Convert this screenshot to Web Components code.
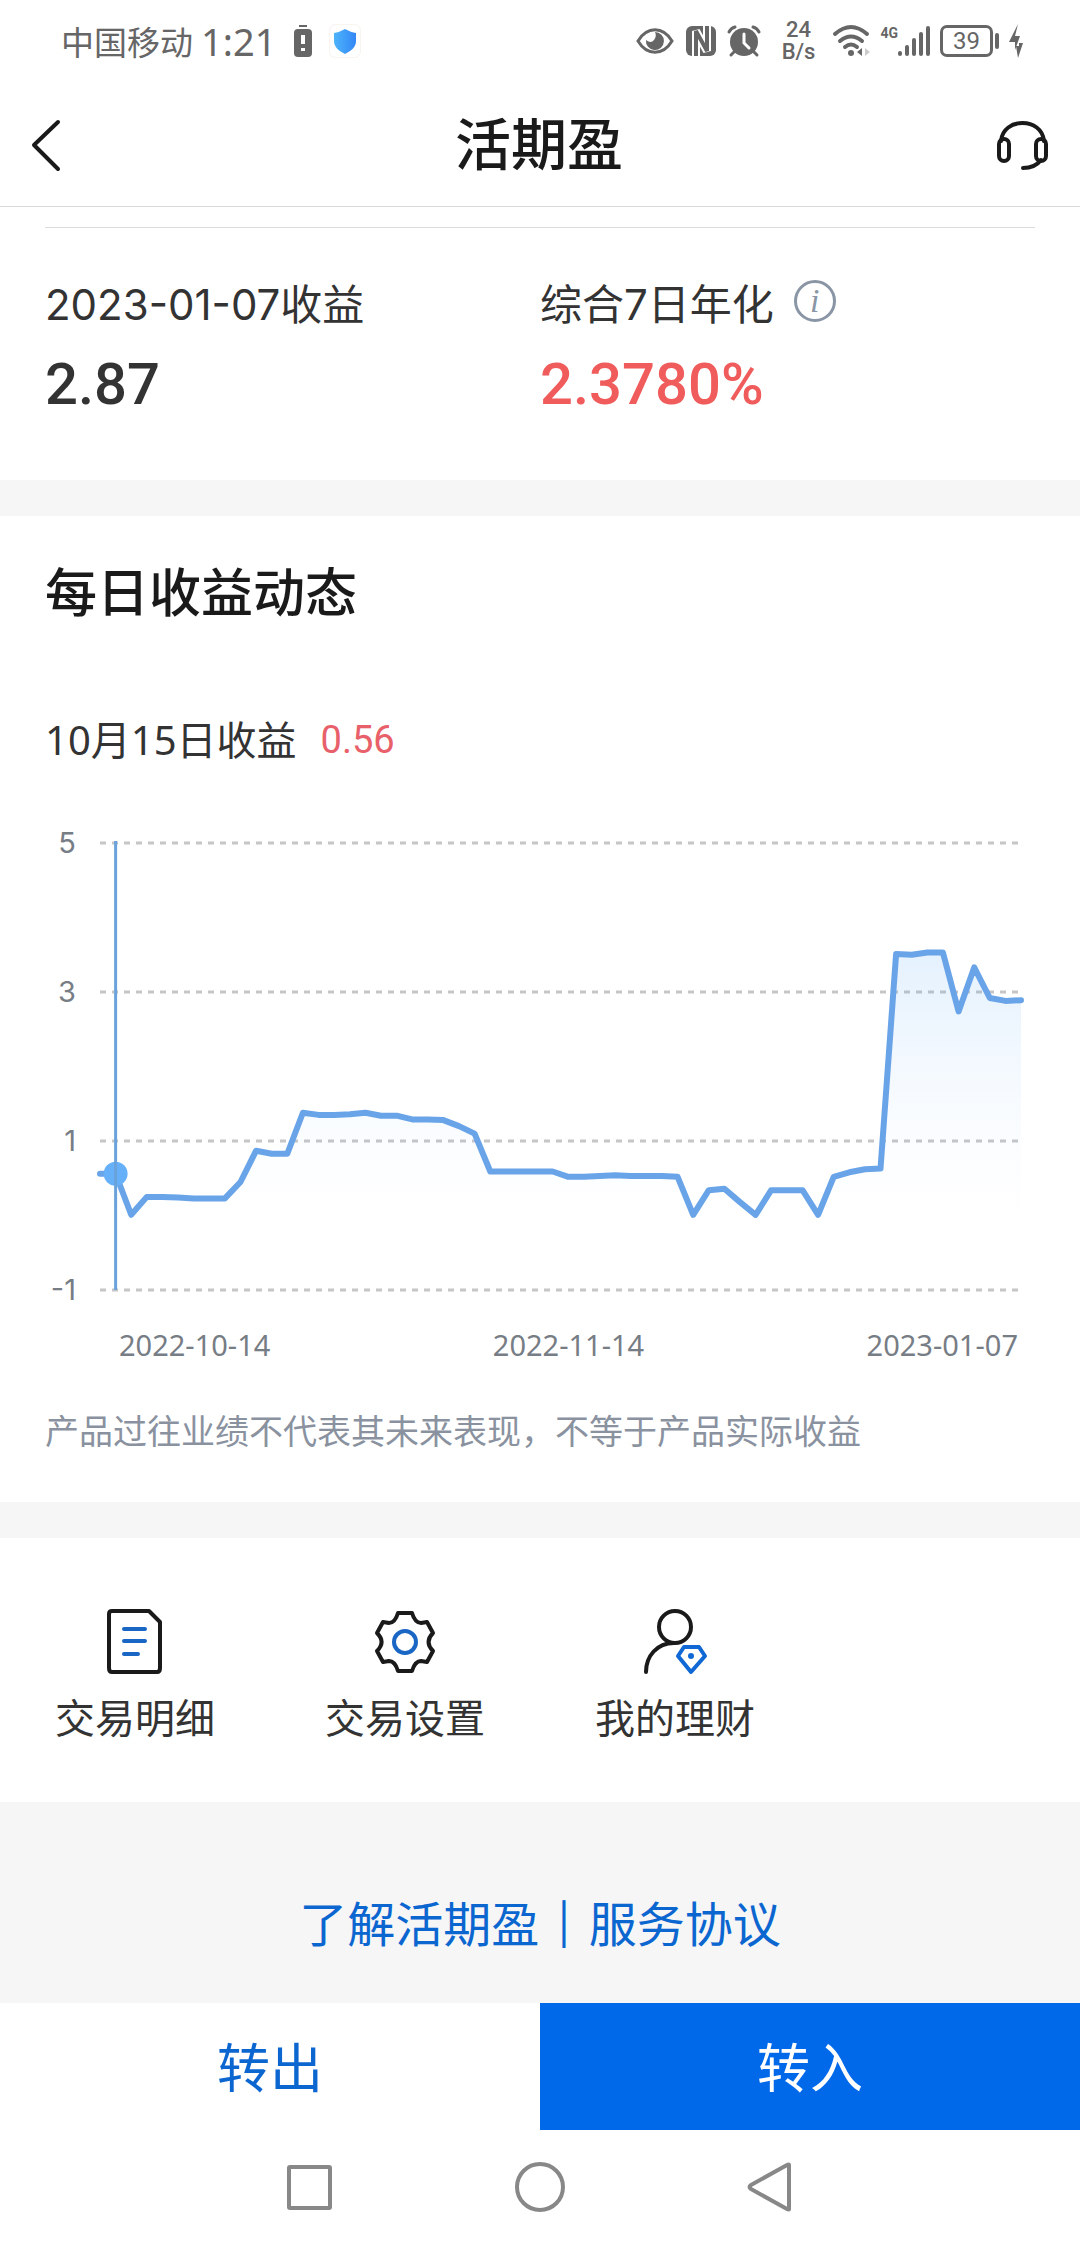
<!DOCTYPE html>
<html lang="zh-CN">
<head>
<meta charset="utf-8">
<meta name="viewport" content="width=device-width, initial-scale=1">
<title>活期盈</title>
<style>
  body {
    margin: 0;
    background: #fff;
    color: #333;
    font-family: Inter, "Noto Sans CJK SC", sans-serif;
  }
</style>
</head>
<body>
<income-page></income-page>

<script>
const ICONS = {
  alert: { w: 18, h: 32, svg: `
    <rect x="5" y="0" width="8" height="2" fill="currentColor"/>
    <rect y="4" width="18" height="28" rx="4" fill="currentColor"/>
    <path d="M9 10v9M9 23v3" stroke="#fff" stroke-width="4"/>` },
  shield: { w: 32, h: 34, svg: `
    <defs><linearGradient id="g" x2="1"><stop stop-color="#4db4fb"/><stop offset="1" stop-color="#3387f5"/></linearGradient></defs>
    <rect x=".5" y=".5" width="31" height="33" rx="6" fill="#fff" stroke="#f8f4ef"/>
    <path d="M16 5q5 3 11 4v8c0 6-5 10-11 13-6-3-11-7-11-13V9q6-1 11-4z" fill="url(#g)"/>` },
  eye: { w: 38, h: 26, svg: `
    <path d="M2 13C11-2 27-2 36 13 27 28 11 28 2 13z" fill="none" stroke="currentColor" stroke-width="3"/>
    <path d="M19 4a9 9 0 1 1-9 8q5 4 8 0 3-4 1-8z" fill="currentColor"/>` },
  nfc: { w: 30, h: 30, svg: `
    <rect width="30" height="30" rx="6" fill="currentColor"/>
    <path d="M10 30V5l11 20V0" fill="none" stroke="#fff" stroke-width="8" stroke-linejoin="bevel"/>
    <path d="M10 30V5l11 20V0" fill="none" stroke="currentColor" stroke-width="4" stroke-linejoin="bevel"/>` },
  alarm: { w: 32, h: 30, svg: `
    <circle cx="16" cy="16" r="14" fill="currentColor"/>
    <path d="M1 6q2-4 6-5M31 6q-2-4-6-5M6 26l-3 3M26 26l3 3" fill="none" stroke="currentColor" stroke-width="3" stroke-linecap="round"/>
    <path d="M16 8v9l5 5" fill="none" stroke="#fff" stroke-width="3" stroke-linecap="round"/>` },
  wifi: { w: 37, h: 32, svg: `
    <path d="M2 9q16-14 32 0M7 16q11-9 22 0M12 22q6-5 12 0" fill="none" stroke="currentColor" stroke-width="4" stroke-linecap="round"/>
    <circle cx="18" cy="28" r="3" fill="currentColor"/>
    <path d="M29 23v8l-5-4z" fill="currentColor"/><path d="M32 23v8l5-4z" fill="#ccc"/>` },
  signal: { w: 32, h: 32, svg: `
    <path d="M2 28v1M9 22v7M16 15v14M23 9v20M30 3v26" stroke="currentColor" stroke-width="4" stroke-linecap="round"/>` },
  bolt: { w: 14, h: 34, svg: `
    <path d="M9 0L0 18h6v8l5-14H6z M10 14v8H7l2 12 5-15h-4z" fill="currentColor"/>` },
  back: { w: 36, h: 56, svg: `
    <path d="M30 5L6 28l24 24" fill="none" stroke="currentColor" stroke-width="4" stroke-linecap="round" stroke-linejoin="round"/>` },
  headset: { w: 56, h: 56, svg: `
    <g fill="none" stroke="currentColor" stroke-width="4" stroke-linecap="round">
      <rect x="5" y="22" width="10" height="22" rx="5"/><rect x="42" y="22" width="10" height="22" rx="5"/>
      <path d="M7 24C9 0 48 0 50 24M47 43q-6 8-18 8"/>
    </g>` },
  bill: { w: 72, h: 72, svg: `
    <g fill="none" stroke-width="4" stroke-linecap="round" stroke-linejoin="round">
      <path d="M13 6h37l11 11v46q0 4-3 4H13q-3 0-3-4V9q0-3 3-3z" stroke="#1a1a1a"/>
      <path d="M25 24h21M25 36h21M25 49h14" stroke="#1a66c4"/>
    </g>` },
  gear: { w: 72, h: 72, svg: `
    <path d="M29 8h14q3 10 9 10l6-1 6 11q-9 9 0 18l-6 11-6-1q-6 0-9 10H29q-3-10-9-10l-6 1L8 46q9-9 0-18l6-11 6 1q6 0 9-10z" fill="none" stroke="#1a1a1a" stroke-width="4" stroke-linejoin="round"/>
    <circle cx="36" cy="37" r="11" fill="none" stroke="#1a66c4" stroke-width="4"/>` },
  wealth: { w: 72, h: 72, svg: `
    <g fill="none" stroke-width="4" stroke-linecap="round" stroke-linejoin="round">
      <circle cx="36" cy="22" r="16" stroke="#1a1a1a"/>
      <path d="M7 67c0-16 11-29 28-29" stroke="#1a1a1a"/>
      <path d="M45 42h15l6 9-14 16-13-16z" stroke="#1068d4"/>
    </g>
    <circle cx="52" cy="51" r="3" fill="#1068d4"/>` },
  recents: { w: 50, h: 50, svg: `
    <rect x="4" y="5" width="41" height="41" rx="1" fill="none" stroke="currentColor" stroke-width="4"/>` },
  home: { w: 50, h: 50, svg: `
    <circle cx="25" cy="25" r="23" fill="none" stroke="currentColor" stroke-width="4"/>` },
  previous: { w: 50, h: 50, svg: `
    <path d="M44 3v44q0 1-2 0L6 27q-3-2 0-4L42 3q2-1 2 0z" fill="none" stroke="currentColor" stroke-width="4" stroke-linejoin="round"/>` }
};

class UiIcon extends HTMLElement {
  connectedCallback() {
    const icon = ICONS[this.getAttribute('name')];
    this.attachShadow({ mode: 'open' }).innerHTML = `
      <style>
        :host { display: inline-flex; flex: none; }
        svg { display: block; overflow: visible; }
      </style>
      <svg width="${icon.w}" height="${icon.h}" viewBox="0 0 ${icon.w} ${icon.h}" aria-hidden="true">${icon.svg}</svg>
    `;
  }
}
customElements.define('ui-icon', UiIcon);

class StatusBar extends HTMLElement {
  constructor() {
    super();
    this.attachShadow({ mode: 'open' }).innerHTML = `
      <style>
        :host {
          display: flex; justify-content: space-between; align-items: center;
          height: 84px; padding: 0 57px 2px 61px; box-sizing: border-box; color: #666;
          font-family: "Noto Sans", "Noto Sans CJK SC", sans-serif;
        }
        div { display: flex; align-items: center; }
        .carrier { font-size: 33px; }
        .time { font-size: 38px; margin: 0 18px 0 8px; }
        .left ui-icon + ui-icon { margin-left: 17px; }
        .right { gap: 10px; }
        .modes { gap: 12px; }
        .speed { flex-direction: column; font: 500 22px/22px Roboto, sans-serif; margin: 0 8px 0 12px; }
        .mobile { align-items: flex-start; }
        .mobile span { font: 700 14px/16px Roboto, sans-serif; }
        .battery { gap: 2px; }
        .level {
          width: 53px; height: 32px; box-sizing: border-box; justify-content: center;
          border: 3px solid; border-radius: 7px; font: 24px/24px Roboto, sans-serif;
        }
        .knob { width: 4px; height: 16px; border-radius: 2px; background: currentColor; }
      </style>
      <div class="left">
        <span class="carrier">中国移动</span><span class="time">1:21</span>
        <ui-icon name="alert"></ui-icon><ui-icon name="shield"></ui-icon>
      </div>
      <div class="right">
        <div class="modes">
          <ui-icon name="eye"></ui-icon>
          <ui-icon name="nfc"></ui-icon>
          <ui-icon name="alarm"></ui-icon>
        </div>
        <div class="speed"><span>24</span><span>B/s</span></div>
        <ui-icon name="wifi"></ui-icon>
        <div class="mobile"><span>4G</span><ui-icon name="signal"></ui-icon></div>
        <div class="battery"><div class="level">39</div><div class="knob"></div></div>
        <ui-icon name="bolt"></ui-icon>
      </div>
    `;
  }
}
customElements.define('status-bar', StatusBar);

class PageHeader extends HTMLElement {
  constructor() {
    super();
    this.attachShadow({ mode: 'open' }).innerHTML = `
      <style>
        :host {
          display: grid; grid-template-columns: 1fr auto 1fr; align-items: center;
          height: 123px; box-sizing: border-box; padding: 0 30px 0 28px;
          border-bottom: 1px solid #d9d9d9; color: #1a1a1a;
        }
        h1 { margin: 0; font-size: 56px; font-weight: 500; line-height: 80px; }
        button { display: flex; padding: 0; border: 0; background: none; color: inherit; cursor: pointer; }
        .service { justify-self: end; }
      </style>
      <button aria-label="返回"><ui-icon name="back"></ui-icon></button>
      <h1><slot></slot></h1>
      <button class="service" aria-label="客服"><ui-icon name="headset"></ui-icon></button>
    `;
  }
}
customElements.define('page-header', PageHeader);

class SummaryItem extends HTMLElement {
  constructor() {
    super();
    this.attachShadow({ mode: 'open' }).innerHTML = `
      <style>
        :host { display: block; }
        .label { display: flex; align-items: center; gap: 20px; font-size: 42px; line-height: 60px; }
        .value { margin-top: 13px; font: 500 58px/72px Roboto, sans-serif; }
        :host([highlight]) .value { color: #f05b5b; }
      </style>
      <div class="label"><slot name="label"></slot><slot name="info"></slot></div>
      <div class="value"><slot></slot></div>
    `;
  }
}
customElements.define('summary-item', SummaryItem);

class InfoButton extends HTMLElement {
  constructor() {
    super();
    this.attachShadow({ mode: 'open' }).innerHTML = `
      <style>
        :host { display: flex; margin-bottom: 8px; }
        button {
          width: 42px; height: 42px; box-sizing: border-box; padding: 0; border: 3px solid #8a96a5;
          border-radius: 50%; background: none; color: #8a96a5; cursor: pointer;
          font: italic 34px/34px "Liberation Serif", serif;
        }
      </style>
      <button>i</button>
    `;
  }
}
customElements.define('info-button', InfoButton);

const INCOME = [
  0.56, 0.56, 0.01, 0.25, 0.25, 0.24, 0.23, 0.23, 0.23, 0.45, 0.87, 0.83, 0.83, 1.38, 1.35,
  1.35, 1.36, 1.38, 1.34, 1.34, 1.29, 1.29, 1.28, 1.20, 1.10, 0.59, 0.59, 0.59, 0.59, 0.59,
  0.52, 0.52, 0.53, 0.54, 0.53, 0.53, 0.53, 0.52, 0.01, 0.34, 0.36, 0.18, 0.01, 0.34, 0.34,
  0.34, 0.01, 0.52, 0.58, 0.62, 0.63, 3.51, 3.50, 3.53, 3.53, 2.74, 3.33, 2.92, 2.88, 2.89
];

class IncomeChart extends HTMLElement {
  constructor() {
    super();
    this.attachShadow({ mode: 'open' });
    this._selected = 1;
  }

  connectedCallback() {
    const ticks = [5, 3, 1, -1];
    const x = i => 5 + i * 921 / (INCOME.length - 1);
    const y = v => 15 + (5 - v) * 149 / 2;
    const points = INCOME.map((v, i) => `${x(i).toFixed(1)},${y(v).toFixed(1)}`).join(' ');
    const sx = x(this._selected);

    this.shadowRoot.innerHTML = `
      <style>
        :host {
          display: block; color: #777d85;
          font: 29px/30px "Noto Sans", "Noto Sans CJK SC", sans-serif;
        }
        .plot { display: flex; gap: 19px; }
        .y {
          width: 31px; display: flex; flex-direction: column; justify-content: space-between;
          text-align: right; font-family: Inter, sans-serif;
        }
        svg { flex: 1; min-width: 0; overflow: visible; }
        .x { display: flex; justify-content: space-between; margin-top: 20px; padding: 0 17px 0 74px; line-height: 40px; }
      </style>
      <div class="plot">
        <div class="y">${ticks.map(t => `<span>${t}</span>`).join('')}</div>
        <svg viewBox="0 0 940 477" role="img" aria-label="每日收益动态">
          <defs>
            <linearGradient id="area" x2="0" y2="1">
              <stop stop-color="#5ba9f5" stop-opacity=".16"/>
              <stop offset=".6" stop-color="#5ba9f5" stop-opacity=".04"/>
              <stop offset="1" stop-color="#5ba9f5" stop-opacity="0"/>
            </linearGradient>
          </defs>
          ${ticks.map(t => `<path d="M5 ${y(t)}H924" stroke="#c6c6c6" stroke-width="3" stroke-dasharray="6 6"/>`).join('')}
          <polygon points="${x(0)},${y(0)} ${points} ${x(INCOME.length - 1)},${y(0)}" fill="url(#area)"/>
          <polyline points="${points}" fill="none" stroke="#6aa4e8" stroke-width="6" stroke-linecap="round" stroke-linejoin="round"/>
          <circle cx="${sx}" cy="${y(INCOME[this._selected])}" r="12" fill="#66b0fa"/>
          <path d="M${sx} 13V462" stroke="#6aa2dc" stroke-width="3"/>
        </svg>
      </div>
      <div class="x"><span>2022-10-14</span><span>2022-11-14</span><span>2023-01-07</span></div>
    `;
  }
}
customElements.define('income-chart', IncomeChart);

class ActionItem extends HTMLElement {
  connectedCallback() {
    this.attachShadow({ mode: 'open' }).innerHTML = `
      <style>
        :host { display: block; }
        button {
          display: flex; flex-direction: column; align-items: center; gap: 14px; width: 100%;
          padding: 0; border: 0; background: none; color: #333; font: inherit;
          font-size: 40px; line-height: 56px; cursor: pointer;
        }
      </style>
      <button><ui-icon name="${this.getAttribute('icon')}"></ui-icon><slot></slot></button>
    `;
  }
}
customElements.define('action-item', ActionItem);

class TransferBar extends HTMLElement {
  constructor() {
    super();
    this.attachShadow({ mode: 'open' }).innerHTML = `
      <style>
        :host { display: grid; grid-template-columns: 1fr 1fr; }
        button {
          padding: 30px 0 25px; border: 0; background: #fff; color: #0b66d0;
          font: inherit; font-size: 53px; line-height: 72px; cursor: pointer;
        }
        .in { background: #0069ea; color: #fff; }
      </style>
      <button>转出</button><button class="in">转入</button>
    `;
  }
}
customElements.define('transfer-bar', TransferBar);

class NavBar extends HTMLElement {
  constructor() {
    super();
    this.attachShadow({ mode: 'open' }).innerHTML = `
      <style>
        :host { display: flex; justify-content: center; gap: 180px; padding: 32px 0; color: #888; }
        button { display: flex; padding: 0; border: 0; background: none; color: inherit; cursor: pointer; }
      </style>
      <button aria-label="最近任务"><ui-icon name="recents"></ui-icon></button>
      <button aria-label="主页"><ui-icon name="home"></ui-icon></button>
      <button aria-label="返回"><ui-icon name="previous"></ui-icon></button>
    `;
  }
}
customElements.define('nav-bar', NavBar);

class IncomePage extends HTMLElement {
  constructor() {
    super();
    this.attachShadow({ mode: 'open' }).innerHTML = `
      <style>
        :host { display: block; }
        main { background: #f6f6f6; display: flex; flex-direction: column; }
        section { background: #fff; margin-bottom: 36px; padding: 0 45px; }
        .summary { padding-top: 20px; padding-bottom: 60px; }
        .summary-row { display: grid; grid-template-columns: 1fr 1fr; padding-top: 47px; border-top: 1px solid #dcdcdc; }
        .daily { padding-top: 42px; padding-bottom: 45px; }
        h2 { margin: 0; color: #1a1a1a; font-size: 52px; font-weight: 500; line-height: 72px; }
        .day {
          display: flex; align-items: center; gap: 24px; margin: 80px 0 58px;
          font: 40px/60px "Noto Sans", "Noto Sans CJK SC", sans-serif;
        }
        .day b { color: #e8606a; font-family: Roboto, sans-serif; font-size: 38px; font-weight: 400; }
        .note { margin: 42px 0 0; color: #8a929f; font-size: 34px; line-height: 50px; }
        .actions { display: grid; grid-template-columns: repeat(4, 1fr); margin: 0; padding: 67px 0 55px; }
        .links {
          display: flex; justify-content: center; gap: 18px; padding: 88px 0 43px;
          color: #0b66d0; font-size: 48px; line-height: 70px;
        }
        .links span { font-size: 40px; }
        a { color: inherit; text-decoration: none; }
      </style>
      <status-bar></status-bar>
      <page-header>活期盈</page-header>
      <main>
        <section class="summary">
          <div class="summary-row">
            <summary-item><span slot="label">2023-01-07收益</span>2.87</summary-item>
            <summary-item highlight>
              <span slot="label">综合7日年化</span><info-button slot="info"></info-button>2.3780%
            </summary-item>
          </div>
        </section>
        <section class="daily">
          <h2>每日收益动态</h2>
          <div class="day"><span>10月15日收益</span><b>0.56</b></div>
          <income-chart></income-chart>
          <p class="note">产品过往业绩不代表其未来表现，不等于产品实际收益</p>
        </section>
        <section class="actions">
          <action-item icon="bill">交易明细</action-item>
          <action-item icon="gear">交易设置</action-item>
          <action-item icon="wealth">我的理财</action-item>
        </section>
        <div class="links"><a href="#about">了解活期盈</a><span>|</span><a href="#agreement">服务协议</a></div>
      </main>
      <transfer-bar></transfer-bar>
      <nav-bar></nav-bar>
    `;
  }
}
customElements.define('income-page', IncomePage);
</script>
</body>
</html>
